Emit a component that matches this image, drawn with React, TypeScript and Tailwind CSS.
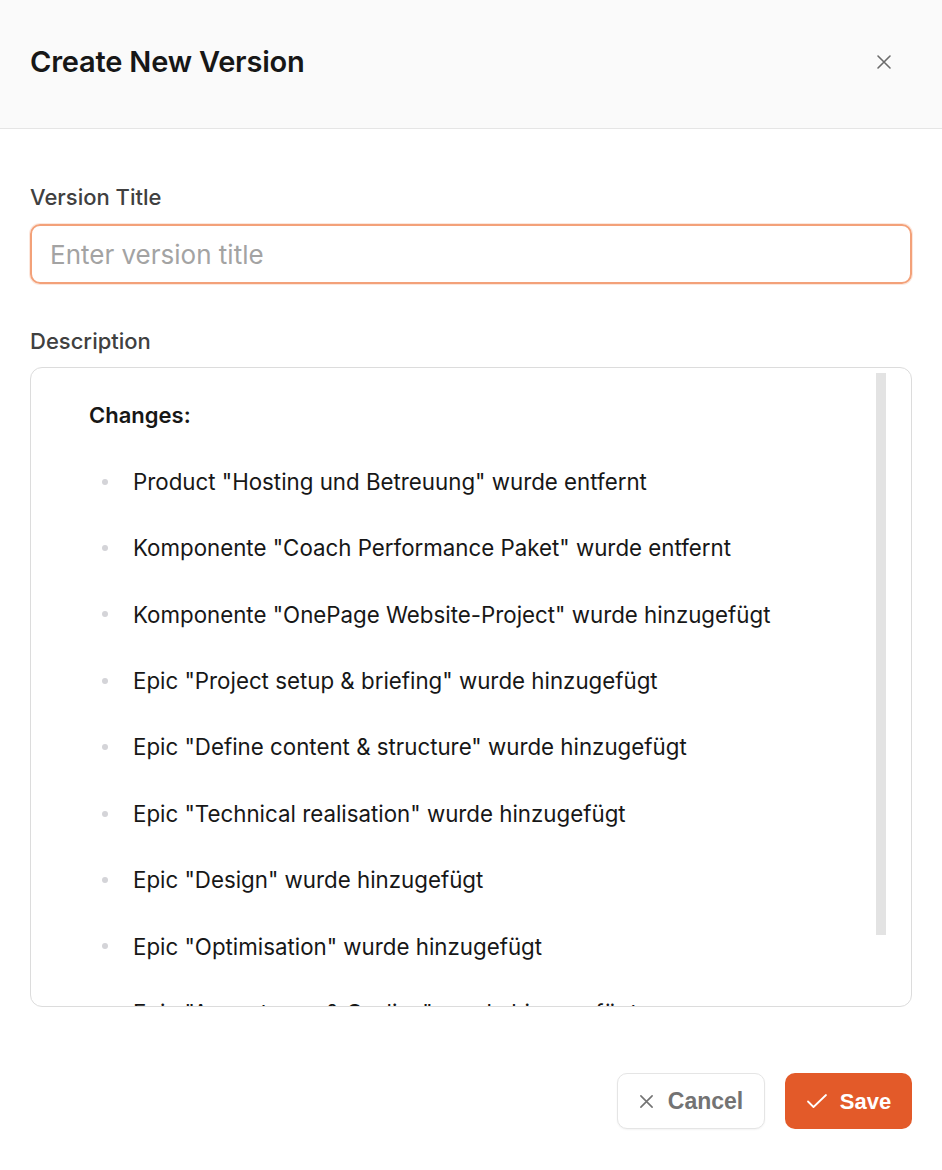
import React from "react";

const items = [
  'Product "Hosting und Betreuung" wurde entfernt',
  'Komponente "Coach Performance Paket" wurde entfernt',
  'Komponente "OnePage Website-Project" wurde hinzugefügt',
  'Epic "Project setup & briefing" wurde hinzugefügt',
  'Epic "Define content & structure" wurde hinzugefügt',
  'Epic "Technical realisation" wurde hinzugefügt',
  'Epic "Design" wurde hinzugefügt',
  'Epic "Optimisation" wurde hinzugefügt',
  'Epic "Acceptance & Go-live" wurde hinzugefügt',
];

export default function App() {
  return (
    <div className="w-[942px] h-[1170px] bg-white flex flex-col font-['Inter','Noto_Sans',sans-serif] overflow-hidden">
      <div className="h-[129px] shrink-0 bg-[#fafafa] border-b border-[#e5e5e5] flex items-center justify-between pl-[30px] pr-[50px] pb-[5px]">
        <h1 className="text-[29px] font-semibold text-[#171717] tracking-[-0.2px]">Create New Version</h1>
        <svg width="16" height="16" viewBox="0 0 16 16" fill="none" stroke="#6b6b6b" strokeWidth="1.6" strokeLinecap="round">
          <path d="M2 2L14 14M14 2L2 14" />
        </svg>
      </div>

      <div className="flex flex-col px-[30px] pt-[54px]">
        <label className="text-[22px] leading-[28px] font-medium text-[#404040] mb-[13px]">Version Title</label>
        <div className="h-[60px] rounded-[10px] border-2 border-[#f3a179] shadow-[0_0_0_1px_rgba(243,161,121,0.25)] flex items-center px-[18px]">
          <span className="text-[26px] text-[#a3a3a3]">Enter version title</span>
        </div>

        <label className="text-[22px] leading-[28px] font-medium text-[#404040] mt-[43px] mb-[12px]">Description</label>
        <div className="relative h-[640px] rounded-[12px] border border-[#dcdcdc] overflow-hidden">
          <div className="flex flex-col pl-[58px] pt-[14px]">
            <div className="h-[66.4px] flex items-center text-[22px] font-semibold text-[#171717]">Changes:</div>
            {items.map((t) => (
              <div key={t} className="h-[66.4px] flex items-center text-[22.3px] text-[#171717] whitespace-nowrap">
                <span className="w-[6px] h-[6px] rounded-full bg-[#d4d4d8] ml-[13px] mr-[25px] shrink-0" />
                <span>{t}</span>
              </div>
            ))}
          </div>
          <div className="absolute right-[25px] top-[5px] w-[10px] h-[562px] bg-[#e3e3e3]" />
        </div>

        <div className="flex justify-end gap-[20px] mt-[66px]">
          <button className="h-[56px] w-[148px] rounded-[10px] border border-[#e5e5e5] bg-white shadow-[0_1px_2px_rgba(0,0,0,0.05)] flex items-center justify-center gap-[14px] font-['Liberation_Sans',Arial,sans-serif] font-bold text-[23px] text-[#737373]">
            <svg width="15" height="15" viewBox="0 0 16 16" fill="none" stroke="#737373" strokeWidth="1.7" strokeLinecap="round">
              <path d="M2 2L14 14M14 2L2 14" />
            </svg>
            Cancel
          </button>
          <button className="h-[56px] w-[127px] rounded-[10px] bg-[#e35a29] flex items-center justify-center gap-[12px] font-['Liberation_Sans',Arial,sans-serif] font-bold text-[22px] text-white">
            <svg width="22" height="16" viewBox="0 0 22 16" fill="none" stroke="white" strokeWidth="1.8" strokeLinecap="round" strokeLinejoin="round">
              <path d="M2 8.5L7.5 14L20 2" />
            </svg>
            Save
          </button>
        </div>
      </div>
    </div>
  );
}
